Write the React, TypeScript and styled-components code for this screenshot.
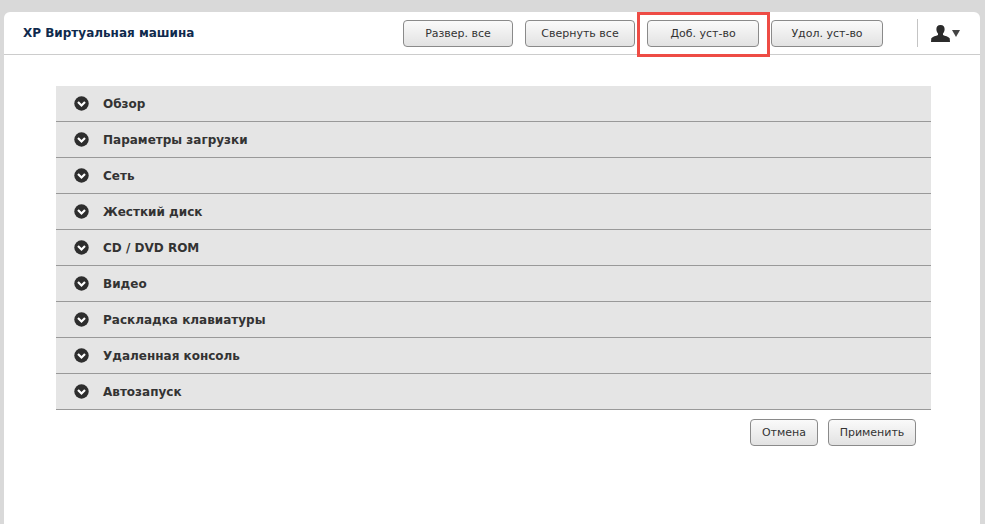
import React from 'react';
import styled, { createGlobalStyle } from 'styled-components';

const GlobalStyle = createGlobalStyle`
  html, body {
    margin: 0;
    height: 100%;
    background: #d9d9d9;
    overflow: hidden;
  }
  #root {
    height: 100%;
  }
`;

const Page = styled.div`
  height: 524px;
  box-sizing: border-box;
  padding: 12px 5px 0 4px;
  font-family: 'DejaVu Sans', Verdana, sans-serif;
`;

const Card = styled.div`
  height: 100%;
  background: #fff;
  border-radius: 6px 6px 0 0;
`;

const Header = styled.header`
  display: flex;
  align-items: center;
  height: 42px;
  padding: 0 20px 0 19px;
  border-bottom: 1px solid #cccccc;
`;

const Title = styled.h1`
  flex: 1;
  margin: 0;
  font-size: 12px;
  font-weight: bold;
  color: #0f2a4d;
`;

const Toolbar = styled.div`
  display: flex;
  align-items: center;
  gap: 12px;
`;

const Button = styled.button<{ $width: number; $highlighted?: boolean }>`
  position: relative;
  width: ${(p) => p.$width}px;
  height: 27px;
  padding: 0;
  border: 1px solid #8a8a8a;
  border-radius: 4px;
  background: linear-gradient(#fafafa, #e2e2e2);
  font-family: inherit;
  font-size: 11px;
  color: #333;
  ${(p) =>
    p.$highlighted &&
    `
    &::after {
      content: '';
      position: absolute;
      left: -11px;
      top: -9px;
      width: 133px;
      height: 45px;
      box-sizing: border-box;
      border: 3px solid #ee4c45;
    }
  `}
`;

const UserMenu = styled.div`
  display: flex;
  align-items: center;
  gap: 2px;
  height: 28px;
  margin-left: 34px;
  padding-left: 13px;
  border-left: 1px solid #c4c4c4;
`;

const Content = styled.main`
  padding: 31px 49px 0 52px;
`;

const Accordion = styled.div`
  display: flex;
  flex-direction: column;
`;

const Row = styled.div`
  display: flex;
  align-items: center;
  gap: 14px;
  height: 35px;
  padding-left: 18px;
  background: #e5e5e5;
  border-bottom: 1px solid #999;
`;

const RowLabel = styled.span`
  font-size: 12px;
  font-weight: bold;
  color: #333;
`;

const Actions = styled.div`
  display: flex;
  justify-content: flex-end;
  gap: 10px;
  padding: 9px 15px 0 0;
`;

const Chevron = () => (
  <svg width="15" height="15" viewBox="0 0 15 15">
    <circle cx="7.5" cy="7.5" r="7.2" fill="#2e2e2e" />
    <path d="M4 6l3.5 3.5L11 6" fill="none" stroke="#fff" strokeWidth="2.2" />
  </svg>
);

const UserIcon = () => (
  <svg width="19" height="17" viewBox="0 0 19 17">
    <path
      fill="#2b2b2b"
      d="M9.5 0C6.6 0 5.2 2 5.4 4.6c.1 1.6.7 3 1.6 4v1.3c-1.800.8-5.600 1.700-6.700 3.300L0 17h19l-.3-3.800c-1.100-1.600-4.900-2.500-6.700-3.300V8.600c.9-1 1.500-2.400 1.600-4C13.800 2 12.400 0 9.500 0z"
    />
  </svg>
);

const Caret = () => (
  <svg width="8" height="7" viewBox="0 0 8 7">
    <path fill="#444" d="M0 0h8L4 7z" />
  </svg>
);

const sections = [
  'Обзор',
  'Параметры загрузки',
  'Сеть',
  'Жесткий диск',
  'CD / DVD ROM',
  'Видео',
  'Раскладка клавиатуры',
  'Удаленная консоль',
  'Автозапуск',
];

export default function App() {
  return (
    <Page>
      <GlobalStyle />
      <Card>
        <Header>
          <Title>XP Виртуальная машина</Title>
          <Toolbar>
            <Button $width={110}>Развер. все</Button>
            <Button $width={110}>Свернуть все</Button>
            <Button $width={112} $highlighted>
              Доб. уст-во
            </Button>
            <Button $width={112}>Удол. уст-во</Button>
          </Toolbar>
          <UserMenu>
            <UserIcon />
            <Caret />
          </UserMenu>
        </Header>
        <Content>
          <Accordion>
            {sections.map((name) => (
              <Row key={name}>
                <Chevron />
                <RowLabel>{name}</RowLabel>
              </Row>
            ))}
          </Accordion>
          <Actions>
            <Button $width={68}>Отмена</Button>
            <Button $width={88}>Применить</Button>
          </Actions>
        </Content>
      </Card>
    </Page>
  );
}
